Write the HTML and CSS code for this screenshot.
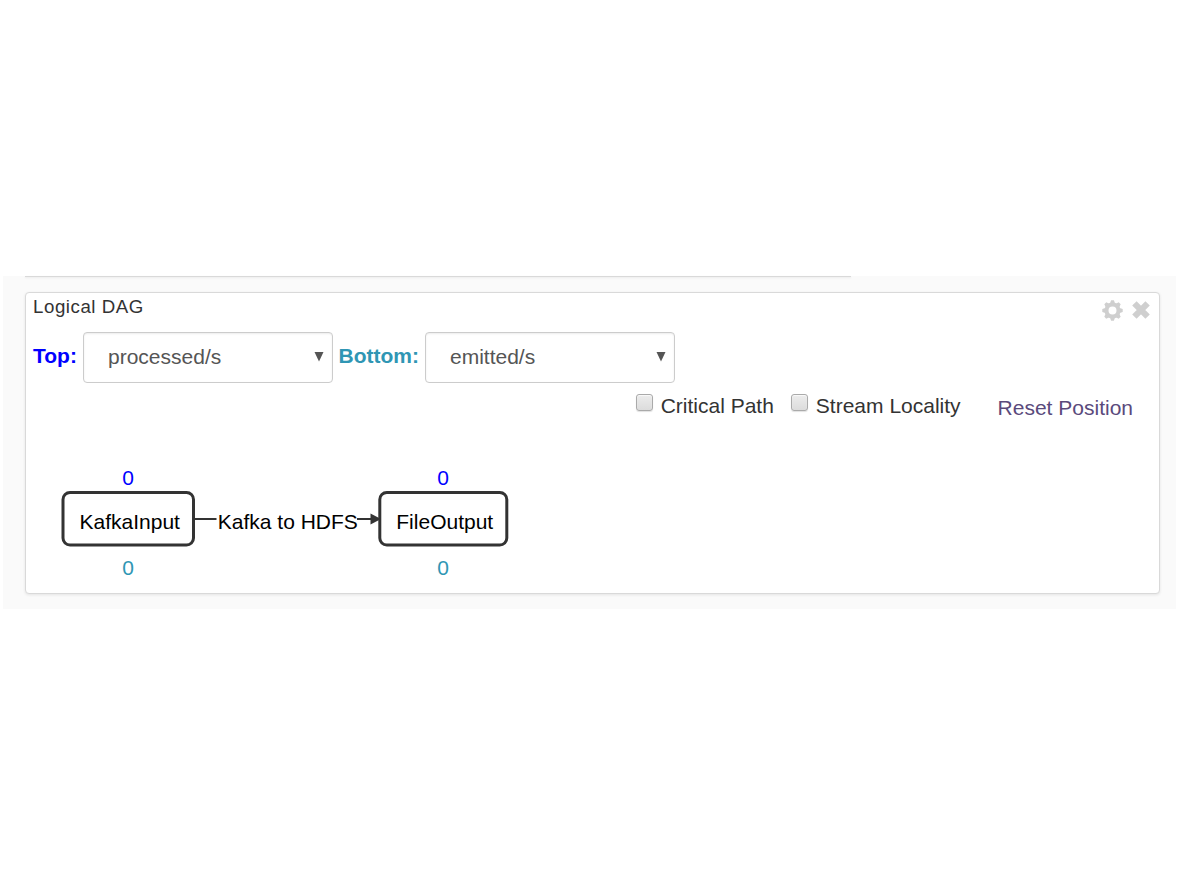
FILE: index.html
```html
<!DOCTYPE html>
<html lang="en">
<head>
<meta charset="utf-8">
<title>Logical DAG</title>
<link rel="stylesheet" href="styles.css">
</head>
<body>
<main class="dashboard">
  <div class="previous-widget"></div>
  <section class="widget">
    <header class="widget-header">
      <h2 class="widget-title">Logical DAG</h2>
      <div class="widget-actions">
        <svg class="icon-gear" width="21" height="21" viewBox="0 0 21 21">
          <g fill="#cfcfcf">
            <path id="tooth" d="M7.8 4 9.1.3h2.8L13.2 4z"/>
            <use href="#tooth" transform="rotate(45 10.5 10.5)"/>
            <use href="#tooth" transform="rotate(90 10.5 10.5)"/>
            <use href="#tooth" transform="rotate(135 10.5 10.5)"/>
            <use href="#tooth" transform="rotate(180 10.5 10.5)"/>
            <use href="#tooth" transform="rotate(225 10.5 10.5)"/>
            <use href="#tooth" transform="rotate(270 10.5 10.5)"/>
            <use href="#tooth" transform="rotate(315 10.5 10.5)"/>
          </g>
          <circle cx="10.5" cy="10.5" r="6" fill="none" stroke="#cfcfcf" stroke-width="4"/>
        </svg>
        <svg class="icon-close" width="18" height="18" viewBox="0 0 18 18">
          <path d="M2.4 2.4 15.6 15.6M15.6 2.4 2.4 15.6" stroke="#cfcfcf" stroke-width="6.2"/>
        </svg>
      </div>
    </header>
    <div class="metrics">
      <label class="metric-label metric-top" for="top">Top:</label>
      <div class="select-box">
        <select class="select" id="top"><option>processed/s</option></select>
        <svg class="caret" width="10" height="10" viewBox="0 0 10 10"><path d="M.5 0h9L5 9.5z" fill="#555"/></svg>
      </div>
      <label class="metric-label metric-bottom" for="bottom">Bottom:</label>
      <div class="select-box">
        <select class="select" id="bottom"><option>emitted/s</option></select>
        <svg class="caret" width="10" height="10" viewBox="0 0 10 10"><path d="M.5 0h9L5 9.5z" fill="#555"/></svg>
      </div>
    </div>
    <div class="options">
      <label class="option"><input class="checkbox" type="checkbox">Critical Path</label>
      <label class="option"><input class="checkbox" type="checkbox">Stream Locality</label>
      <a class="reset" href="#">Reset Position</a>
    </div>
    <svg class="graph" width="1133" height="160" viewBox="26 433 1133 160">
      <g fill="none" stroke="#333" stroke-width="3">
        <rect x="63" y="492.5" width="130.5" height="52.5" rx="7"/>
        <rect x="379.8" y="492.5" width="127" height="52.5" rx="7"/>
      </g>
      <path d="M194 519H216.5M357 519H372" stroke="#333" stroke-width="2"/>
      <path d="M370.5 513.5 381 519 370.5 524.5z" fill="#333"/>
      <text class="node-name" x="79.5" y="529">KafkaInput</text>
      <text class="node-name" x="217.8" y="529">Kafka to HDFS</text>
      <text class="node-name" x="396.3" y="529">FileOutput</text>
      <g text-anchor="middle">
        <text class="value-top" x="128" y="485">0</text>
        <text class="value-top" x="443" y="485">0</text>
        <text class="value-bottom" x="128" y="575">0</text>
        <text class="value-bottom" x="443" y="575">0</text>
      </g>
    </svg>
  </section>
</main>
</body>
</html>
```
FILE: styles.css
```css
* {
  box-sizing: border-box;
}

body {
  margin: 0;
  padding: 276px 4px 0 3px;
  background: #fff;
  color: #333;
  font: 21px/30px "Liberation Sans", Arial, sans-serif;
}

.dashboard {
  height: 333px;
  padding: 0 16px 0 22px;
  background: #fafafa;
}

.previous-widget {
  width: 826px;
  height: 1px;
  margin-bottom: 15px;
  background: #d9d9d9;
  box-shadow: 0 1px 2px rgba(0, 0, 0, .08);
}

.widget {
  height: 302px;
  border: 1px solid #d9d9d9;
  border-radius: 4px;
  background: #fff;
  box-shadow: 0 1px 3px rgba(0, 0, 0, .09);
}

.widget-header {
  display: flex;
  justify-content: space-between;
  height: 39px;
  padding: 0 9px 0 7px;
}

.widget-title {
  margin: 0;
  font-size: 18.7px;
  font-weight: normal;
  line-height: 27px;
  letter-spacing: .55px;
}

.widget-actions {
  display: flex;
  align-items: center;
  gap: 9px;
  height: 34px;
}

.metrics {
  display: flex;
  height: 51px;
  padding-left: 7px;
}

.metric-label {
  font-weight: bold;
  line-height: 48px;
}

.metric-top {
  width: 50px;
  color: #00f;
}

.metric-bottom {
  width: 92px;
  padding-left: 5.5px;
  color: #2f96b4;
}

.select-box {
  position: relative;
  width: 250px;
}

.select {
  width: 250px;
  height: 51px;
  padding: 0 24px 2px;
  border: 1px solid #ccc;
  border-radius: 4px;
  appearance: none;
  background: #fff;
  box-shadow: inset 0 1px 2px rgba(0, 0, 0, .08);
  color: #555;
  font: inherit;
}

.caret {
  position: absolute;
  top: 20px;
  right: 9.5px;
}

.options {
  display: flex;
  justify-content: flex-end;
  height: 50px;
  padding: 8px 26px 0 0;
}

.option {
  display: flex;
  margin-right: 17px;
}

.checkbox {
  width: 17px;
  height: 17px;
  margin: 3px 8px 0 0;
  border: 1px solid #aaa;
  border-radius: 3px;
  appearance: none;
  background: linear-gradient(#ececec, #dcdcdc);
  box-shadow: 0 1px 1px rgba(0, 0, 0, .12), inset 0 1px 1px rgba(255, 255, 255, .7);
}

.reset {
  margin: 2px 0 0 20px;
  color: #5a4a7c;
  text-decoration: none;
}

.graph {
  display: block;
}

.node-name {
  fill: #000;
}

.value-top {
  fill: #00f;
}

.value-bottom {
  fill: #2f96b4;
}
```
